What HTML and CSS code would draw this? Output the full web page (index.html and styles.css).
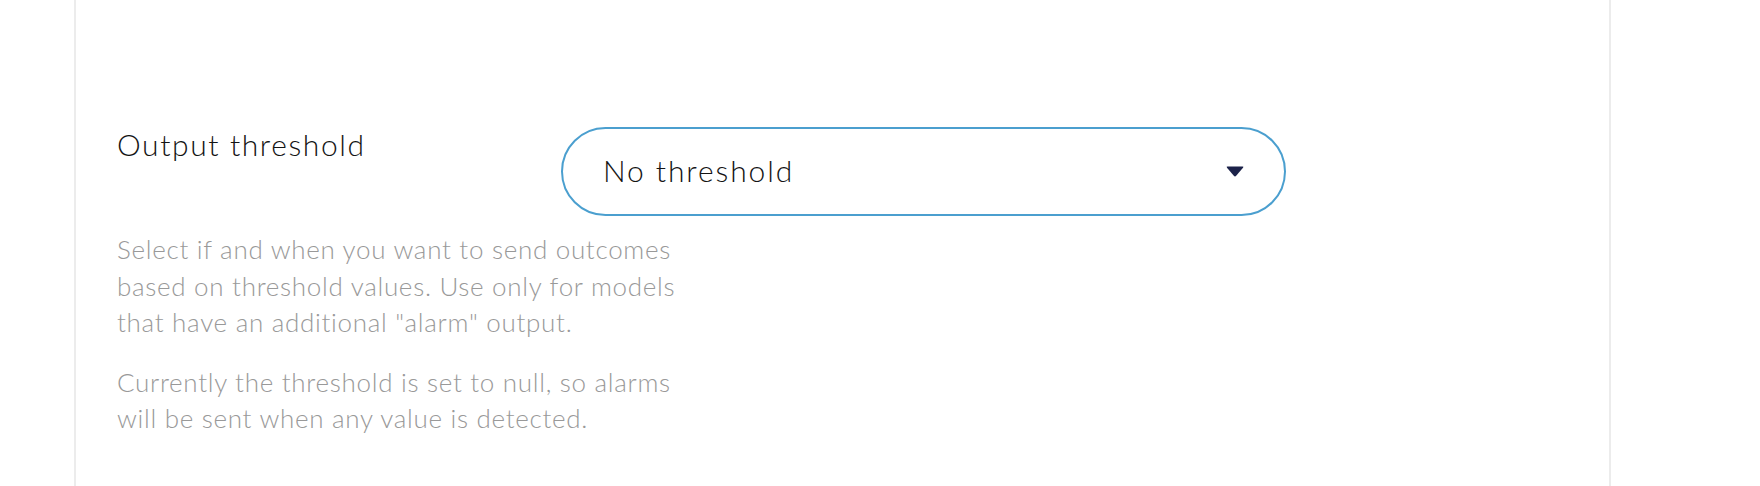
FILE: index.html
```html
<!DOCTYPE html>
<html lang="en">
<head>
<meta charset="utf-8">
<title>Output threshold</title>
<link rel="stylesheet" href="styles.css">
</head>
<body>
<div class="card">
  <div class="field">
    <label class="field-label" for="threshold">Output threshold</label>
    <div class="select" id="threshold">
      <span class="select-value">No threshold</span>
      <svg class="select-arrow" width="18" height="11" viewBox="0 0 18 11" aria-hidden="true">
        <path d="M1.5 0.5 H16.5 Q18 0.5 17 1.7 L10.2 9.8 Q9 11 7.8 9.8 L1 1.7 Q0 0.5 1.5 0.5 Z" fill="#1c2249"/>
      </svg>
    </div>
    <div class="field-help">
      <p>Select if and when you want to send outcomes based on threshold values. Use only for models that have an additional "alarm" output.</p>
      <p>Currently the threshold is set to null, so alarms will be sent when any value is detected.</p>
    </div>
  </div>
</div>
</body>
</html>
```

FILE: styles.css
```css
html, body {
  margin: 0;
  padding: 0;
  background: #ffffff;
}

body {
  font-family: "Lato", "Open Sans", sans-serif;
  font-weight: 300;
  height: 486px;
  overflow: hidden;
}

.card {
  box-sizing: border-box;
  margin-left: 74px;
  width: 1537px;
  height: 486px;
  border-left: 2px solid #ececec;
  border-right: 2px solid #ececec;
  padding: 127px 41px 0 41px;
}

.field {
  display: grid;
  grid-template-columns: 444px 725px;
  row-gap: 15px;
  align-items: start;
}

.field-label {
  font-size: 30px;
  line-height: 34px;
  letter-spacing: 1.6px;
  color: #141414;
}

.select {
  box-sizing: border-box;
  height: 89px;
  border: 2px solid #4b9fcf;
  border-radius: 45px;
  display: flex;
  align-items: center;
  justify-content: space-between;
  padding: 0 40px 3px 40px;
}

.select-value {
  font-size: 30px;
  letter-spacing: 1.9px;
  color: #141414;
}

.select-arrow {
  display: block;
  margin-top: 2px;
}

.field-help {
  grid-column: 1 / span 2;
  max-width: 590px;
  color: #999999;
  font-size: 26px;
  line-height: 36.5px;
  letter-spacing: 0.7px;
}

.field-help p {
  margin: 0 0 23px 0;
}
```
